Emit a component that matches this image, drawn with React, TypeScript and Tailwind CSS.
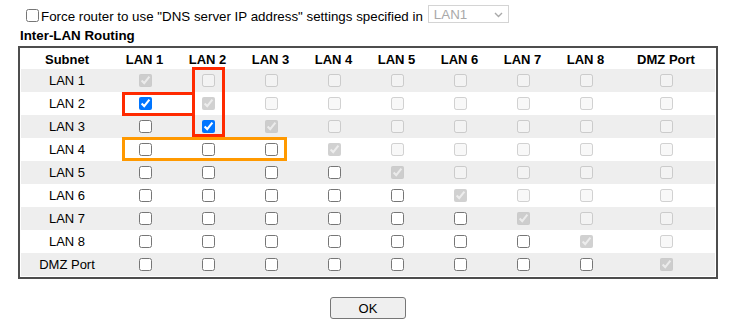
import React from "react";

const labels = ["LAN 1", "LAN 2", "LAN 3", "LAN 4", "LAN 5", "LAN 6", "LAN 7", "LAN 8", "DMZ Port"];

function Cell({ i, j }: { i: number; j: number }) {
  const checkedEnabled = (i === 1 && j === 0) || (i === 2 && j === 1);
  if (j === i) {
    return <input type="checkbox" disabled defaultChecked className="w-[13px] h-[13px] m-0 ml-[1px]" />;
  }
  if (j > i) {
    return <input type="checkbox" disabled className="w-[13px] h-[13px] m-0 ml-[1px]" />;
  }
  return <input type="checkbox" readOnly defaultChecked={checkedEnabled} className="w-[13px] h-[13px] m-0 ml-[1px]" />;
}

export default function App() {
  return (
    <div className="relative w-[742px] h-[327px] overflow-hidden bg-white text-black text-[13px] leading-[15px] font-['Liberation_Sans',Arial,sans-serif]">
      <div className="pl-[18px]">
        <div className="flex items-start h-[28px] pl-[8px] text-[13.33px]">
          <input type="checkbox" className="w-[13px] h-[13px] m-0 mt-[9px]" />
          <span className="mt-[9px] ml-[2px] whitespace-nowrap">
            Force router to use "DNS server IP address" settings specified in
          </span>
          <div className="ml-[5px] mt-[5px] w-[81px] h-[18px] border border-[#d4d4d4] flex items-center justify-between pl-[5px] pr-[5px] text-[#a9a9a9]">
            <span>LAN1</span>
            <svg width="9" height="6" viewBox="0 0 9 6" className="mt-[1px]">
              <path d="M1 1 L4.5 4.5 L8 1" fill="none" stroke="#a9a9a9" strokeWidth="1.4" />
            </svg>
          </div>
        </div>
        <div className="pl-[2px] font-bold text-[13.33px]">Inter-LAN Routing</div>
        <div className="mt-[3px] w-[700px] border-2 border-[#4d4d4d] p-px">
          <div className="grid grid-cols-[92px_repeat(8,63px)_98px] h-[20px] items-center font-bold">
            <div className="text-center">Subnet</div>
            {labels.map((l) => (
              <div key={l} className="text-center">{l}</div>
            ))}
          </div>
          {labels.map((row, i) => (
            <div
              key={row}
              className={
                "grid grid-cols-[92px_repeat(8,63px)_98px] h-[23px] items-center " +
                (i % 2 === 0 ? "bg-[#eeeeee]" : "bg-white")
              }
            >
              <div className="text-center">{row}</div>
              {labels.map((c, j) => (
                <div key={c} className="flex items-center justify-center">
                  <Cell i={i} j={j} />
                </div>
              ))}
            </div>
          ))}
        </div>
        <div className="w-[700px] flex justify-center mt-[18px]">
          <button className="w-[76px] h-[22px] border border-[#767676] rounded-[3px] bg-[#efefef] text-[13px]">
            OK
          </button>
        </div>
      </div>

      <div className="absolute left-[192px] top-[67px] w-[33px] h-[70px] border-[3px] border-[#ff2a00]" />
      <div className="absolute left-[122px] top-[92px] w-[73px] h-[24px] border-[3px] border-[#ff2a00]" />
      <div className="absolute left-[122px] top-[137px] w-[165px] h-[24px] border-[3px] border-[#ff9900]" />
    </div>
  );
}
